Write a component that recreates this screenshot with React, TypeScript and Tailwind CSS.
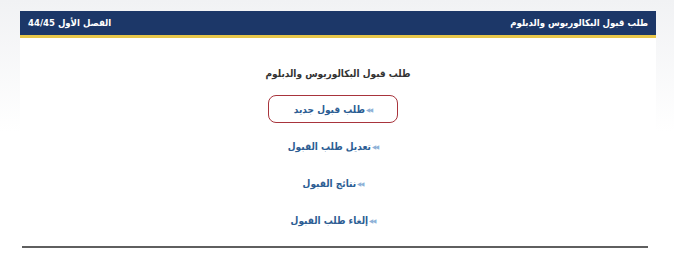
export default function App() {
  const links = ["طلب قبول جديد", "تعديل طلب القبول", "نتائج القبول", "إلغاء طلب القبول"];

  return (
    <div
      dir="rtl"
      className="w-[674px] h-[264px] bg-white bg-gradient-to-b from-[#f1f2f4] via-white to-white pt-[11px]"
      style={{ fontFamily: '"DejaVu Sans Condensed", "DejaVu Sans", sans-serif' }}
    >
      <div className="mr-[18px] ml-[20px] bg-white">
        {/* Title bar */}
        <div className="h-[27px] bg-[#1c3768] border-b-[3px] border-[#e7c64a] flex items-center justify-between px-[8px] text-white text-[9.5px] font-bold">
          <span>طلب قبول البكالوريوس والدبلوم</span>
          <span>الفصل الأول 44/45</span>
        </div>

        <div className="flex flex-col items-center pt-[29px]">
          <div className="text-[10px] font-bold text-[#333] leading-[14px]">طلب قبول البكالوريوس والدبلوم</div>

          <div className="flex flex-col items-center mt-[14px] gap-[9px] mr-[10px]">
            {links.map((label, i) => (
              <a
                key={label}
                className={
                  i === 0
                    ? "w-[130px] h-[28px] flex items-center justify-center rounded-[8px] border-[1.5px] border-[#a8343c] text-[10px] font-bold text-[#2c5d93]"
                    : "w-[130px] h-[28px] flex items-center justify-center text-[10px] font-bold text-[#2c5d93]"
                }
              >
                <span className="text-[#8fb2d8] text-[6px] ml-[1px] tracking-[-1px]">◀◀</span>
                {label}
              </a>
            ))}
          </div>

          <div className="self-stretch h-[2px] bg-[#5f5f5f] mt-[12px] mr-[8px] ml-[2px]" />
        </div>
      </div>
    </div>
  );
}
